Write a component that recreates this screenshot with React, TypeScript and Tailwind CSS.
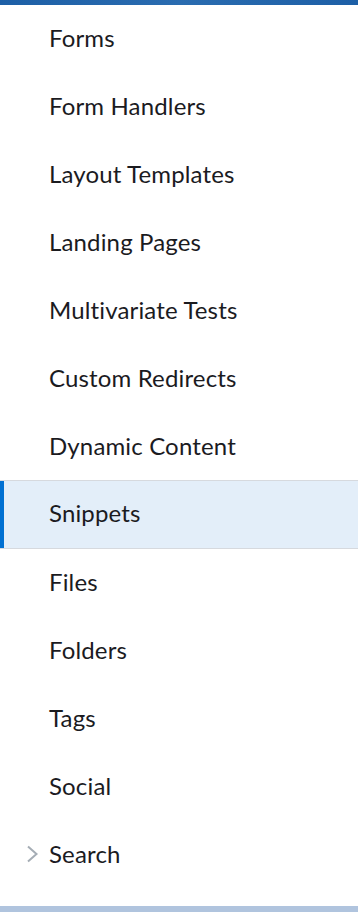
const items = [
  'Forms',
  'Form Handlers',
  'Layout Templates',
  'Landing Pages',
  'Multivariate Tests',
  'Custom Redirects',
  'Dynamic Content',
  'Snippets',
  'Files',
  'Folders',
  'Tags',
  'Social',
  'Search',
];

export default function App() {
  return (
    <main className="flex min-h-screen w-full flex-col bg-white font-['Lato',sans-serif] text-[#1b1b1f] [font-variant-ligatures:none]">
      <div className="h-[5px] bg-gradient-to-r from-[#1d5fa6] via-[#2a6cb0] to-[#1d5fa6]" />
      <ul className="flex flex-col">
        {items.map((label) => {
          const active = label === 'Snippets';
          return (
            <li
              key={label}
              className={
                active
                  ? 'relative -mt-px flex h-[69px] items-center border-y border-[#d6d9de] bg-[#e3eef9] pb-[3px] pl-[49px] text-[24px] tracking-[0.15px]'
                  : 'relative flex h-[68px] items-center pb-[3px] pl-[49px] text-[24px] tracking-[0.15px]'
              }
            >
              {active && <span className="absolute top-0 bottom-0 left-0 w-[4px] bg-[#0070d2]" />}
              {label === 'Search' && (
                <svg className="absolute left-[25px] h-[18px] w-[14px]" viewBox="0 0 14 18" fill="none">
                  <polyline points="3,1.5 11.5,9 3,16.5" stroke="#a5adb5" strokeWidth="2" />
                </svg>
              )}
              {label}
            </li>
          );
        })}
      </ul>
      <div className="flex-1" />
      <div className="h-[6px] bg-[#b0c4de]" />
    </main>
  );
}
